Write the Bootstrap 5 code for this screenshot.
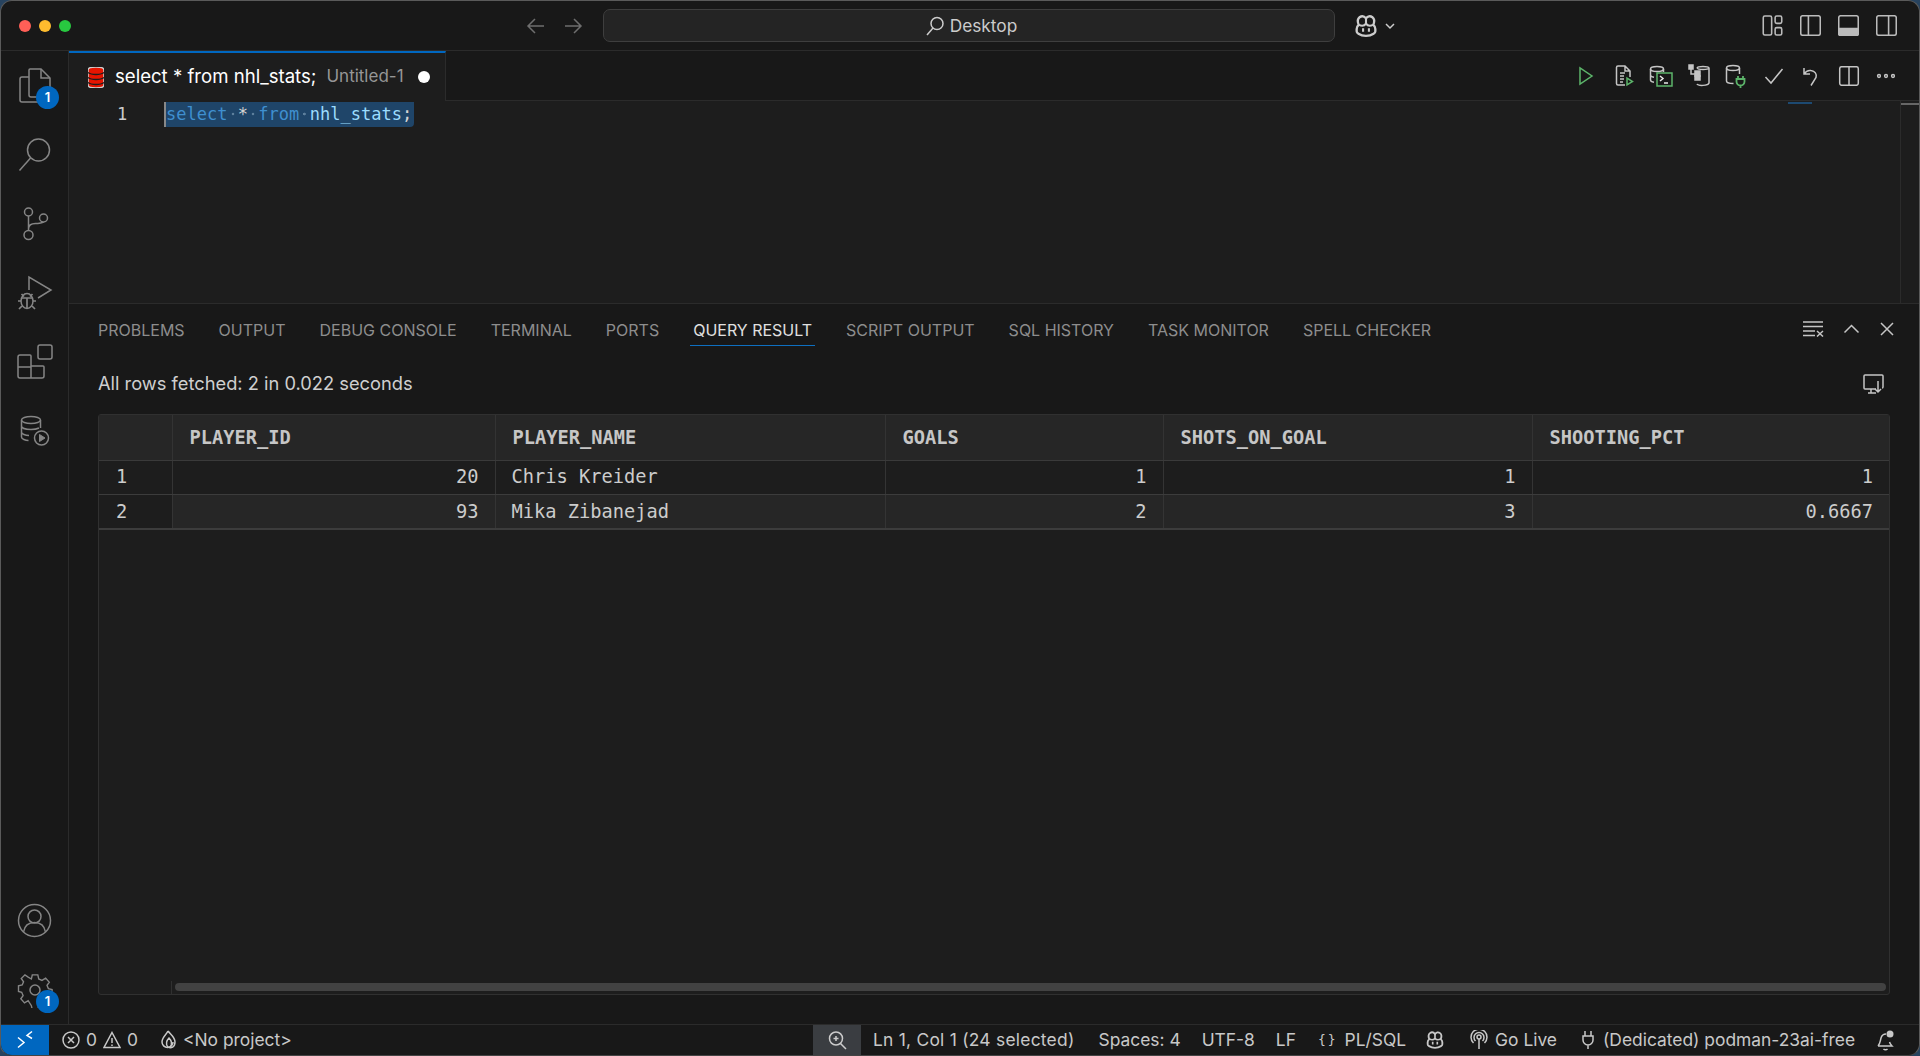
<!DOCTYPE html>
<html lang="en">
<head>
  <meta charset="UTF-8">
  <meta name="viewport" content="width=device-width, initial-scale=1.0">
  <title>select * from nhl_stats;</title>
  <link rel="stylesheet" href="https://cdn.jsdelivr.net/npm/bootstrap@5.3.2/dist/css/bootstrap.min.css"/>
  <style>
    html, body { height: 100%; overflow: hidden; background: #27435f; }
    body { font-family: Inter, "Liberation Sans", sans-serif; color: #ccc; }
    svg { display: block; flex: none; fill: none; stroke: currentColor; stroke-width: 1.5; }

    .vs-window { height: 1056px; border: 1px solid #5a5a5a; border-bottom-color: #444; border-radius: 12px; overflow: hidden; background: #181818; }

    /* title bar */
    .vs-title { height: 50px; flex: none; border-bottom: 1px solid #2b2b2b; position: relative; }
    .light { width: 12px; height: 12px; border-radius: 50%; }
    .lights { width: 511px; padding-left: 18px; gap: 8px; }
    .vs-nav { width: 91px; color: #6e6e6e; gap: 17px; padding-left: 14px; }
    .vs-search { width: 732px; height: 33px; padding-left: 4px; background: #242424; border: 1px solid #3e3e3e; border-radius: 7px; color: #ccc; font-size: 17.3px; gap: 5px; }
    .vs-title-copilot { margin-left: 17px; gap: 5px; color: #ccc; }
    .vs-layout { margin-left: auto; gap: 17px; padding-right: 22px; color: #bbb; }

    /* activity bar */
    .vs-activity { width: 68px; flex: none; border-right: 1px solid #2b2b2b; color: #858585; }
    .vs-act-item { height: 69px; width: 67px; position: relative; }
    .vs-badge { position: absolute; left: 35px; top: 35px; width: 23px; height: 23px; border-radius: 50%; background: #0067c0; color: #fff; font-size: 13px; font-weight: 600; line-height: 23px; text-align: center; }

    /* editor tab row */
    .vs-tabbar { height: 50px; flex: none; border-bottom: 1px solid #2b2b2b; }
    .vs-tab { width: 377px; background: #1d1d1d; border-top: 2px solid #0067c0; border-right: 1px solid #2b2b2b; margin-bottom: -1px; padding-left: 19px; }
    .vs-tab-name { color: #fff; font-size: 18.6px; margin-left: 11px; white-space: nowrap; }
    .vs-tab-path { color: #969696; font-size: 17px; margin-left: 10px; white-space: nowrap; }
    .vs-tab-dot { width: 12px; height: 12px; border-radius: 50%; background: #fff; margin-left: 14px; }
    .vs-actions { margin-left: auto; padding-right: 21px; gap: 13.5px; color: #c5c5c5; }
    .vs-green { color: #5cb46a; }

    /* editor */
    .vs-editor { height: 203px; flex: none; background: #1d1d1d; border-bottom: 1px solid #2b2b2b; position: relative; font-family: "DejaVu Sans Mono", monospace; font-size: 17px; }
    .vs-gutter { width: 95px; padding: 1px 0 0 48px; color: #cccccc; line-height: 25px; }
    .vs-sel { height: 25px; line-height: 25px; margin-top: 1px; padding-right: 2px; background: #1f4569; border-left: 2px solid #888; border-radius: 0 0 4px 0; color: #d4d4d4; white-space: pre; letter-spacing: .02px; }
    .kw { color: #3f8fcf; }
    .id { color: #9cdcfe; }
    .ws { background: radial-gradient(circle, #5d7f9c 1.4px, transparent 1.6px) center no-repeat; }
    .vs-ruler-mark { position: absolute; right: 107px; top: 1px; width: 24px; height: 2px; background: #1d4a72; }
    .vs-ruler { position: absolute; right: 0; top: 0; bottom: 0; width: 19px; border-left: 1px solid #2b2b2b; }
    .vs-ruler::before { content: ""; display: block; height: 2px; background: #666; margin-top: 2px; }

    /* panel */
    .vs-panel { min-height: 0; }
    .vs-ptabs { height: 42px; flex: none; padding: 0 24px 0 26px; }
    .vs-ptab { font-size: 16px; color: #8d8d8d; padding: 0 3px; height: 42px; line-height: 52px; margin-right: 28px; white-space: nowrap; }
    .vs-ptab-on { color: #e0e0e0; border-bottom: 1px solid #0e6fc0; }
    .vs-ptools { margin-left: auto; gap: 19px; color: #c5c5c5; height: 50px; }
    .vs-msg { height: 68px; flex: none; padding: 8px 35px 0 29px; font-size: 18.3px; color: #cfcfcf; }
    .vs-grid { margin: 0 29px 29px 29px; flex-grow: 1; background: #1d1d1d; border: 1px solid #303030; border-radius: 3px; position: relative; min-height: 0; }
    .vs-table { table-layout: fixed; width: 100%; --bs-table-bg: transparent; --bs-table-color: #ccc; --bs-table-border-color: #383838; margin: 0; font-family: "DejaVu Sans Mono", monospace; font-size: 18.7px; }
    .vs-table th, .vs-table td { padding: 1px 16px 0; vertical-align: middle; border-left: 1px solid #343434; white-space: nowrap; }
    .vs-table th { height: 45px; padding-left: 17px; font-weight: 600; color: #c6c6c6; background: #262626; border-bottom: 1px solid #3a3a3a; border-left-color: transparent; }
    .vs-table td { height: 34px; border-bottom: 1px solid #3c3c3c; }
    .vs-table tr > :first-child { border-left: 0; }
    .vs-table td:first-child { padding-left: 17px; background: #1d1d1d; }
    .vs-table .vs-row2 td { background: #262626; border-bottom-width: 2px; height: 35px; padding-top: 2px; }
    .vs-table .vs-row2 td:first-child { background: #1d1d1d; }
    .vs-table td.vs-num { text-align: right; }
    .c0 { width: 73px; } .c1 { width: 323px; } .c2 { width: 390px; } .c3 { width: 278px; } .c4 { width: 369px; }
    .vs-th-line { border-left: 1px solid #333 !important; }
    .vs-corner { position: absolute; left: 72px; bottom: 0; width: 1px; height: 13px; background: #303030; }
    .vs-scroll { position: absolute; left: 76px; right: 3px; bottom: 3px; height: 8px; border-radius: 4px; background: #424242; }

    /* status bar */
    .vs-status { height: 31px; flex: none; border-top: 1px solid #2b2b2b; font-size: 17.4px; color: #c8c8c8; white-space: nowrap; }
    .vs-remote { width: 48px; background: #0067c0; color: #fff; }
    .vs-zoom { width: 48px; background: #3a3d41; color: #ccc; }
    .vs-sleft { width: 764px; gap: 6px; padding-left: 13px; }
    .vs-sright { margin-left: 12px; }
    .vs-ln { letter-spacing: .25px; }
    .gap-a { margin-left: 24px; } .gap-b { margin-left: 21px; } .gap-c { margin-left: 22px; } .gap-d { margin-left: 7px; }
    .gap-e { margin-left: 18px; } .gap-f { margin-left: 24px; } .gap-g { margin-left: 7px; } .gap-h { margin-left: 8px; } .gap-i { margin-left: 20px; }
    .vs-braces { letter-spacing: 2px; font-family: "DejaVu Sans Mono", monospace; font-size: 13px; }
    .vs-flame { margin-left: 16px; }
  </style>
</head>
<body>
  <svg width="0" height="0" style="position:absolute">
    <defs>
      <symbol id="i-copilot" viewBox="0 0 24 24">
        <path d="M6.500 4.500c2-1.500 4-1 5.500 1 1.500-2 3.500-2.500 5.500-1 1.700 1.300 1.800 4 .8 6.500 1.200 1 1.700 2 1.700 3.500v2c0 1-.6 1.700-1.500 2.200C16.500 20 14.500 20.500 12 20.500S7.500 20 5.500 18.700C4.600 18.200 4 17.500 4 16.500v-2c0-1.500.5-2.500 1.700-3.500C4.700 8.500 4.800 5.800 6.500 4.500Z" stroke-width="2"/>
        <path d="M6 11c2 1 4.500 1 6-1 1.500 2 4 2 6 1M12 5.500V10M9.500 14v3M14.500 14v3" stroke-width="1.800"/>
      </symbol>
    </defs>
  </svg>

  <div class="vs-window d-flex flex-column">

    <div class="vs-title d-flex align-items-center">
      <div class="lights d-flex align-items-center">
        <span class="light" style="background:#ff5f57"></span>
        <span class="light" style="background:#febc2e"></span>
        <span class="light" style="background:#28c840"></span>
      </div>
      <div class="vs-nav d-flex align-items-center">
        <svg width="20" height="20" viewBox="0 0 20 20"><path d="M18 10H2.500M9 3l-7 7 7 7"/></svg>
        <svg width="20" height="20" viewBox="0 0 20 20"><path d="M2 10h15.500M11 3l7 7-7 7"/></svg>
      </div>
      <div class="vs-search d-flex align-items-center justify-content-center">
        <svg width="20" height="20" viewBox="0 0 20 20" stroke-width="1.200"><circle cx="12" cy="7.500" r="6"/><path d="M8 12 2 19"/></svg>
        <span>Desktop</span>
      </div>
      <div class="vs-title-copilot d-flex align-items-center">
        <svg width="28" height="28"><use href="#i-copilot"/></svg>
        <svg width="10" height="10" viewBox="0 0 10 10" stroke-width="1"><path d="m1 3 4 4 4-4"/></svg>
      </div>
      <div class="vs-layout d-flex align-items-center">
        <svg width="21" height="21" viewBox="0 0 19 20" stroke-width="1.300"><rect x=".7" y="1" width="8" height="18" rx="1.500"/><rect x="12" y="1" width="6.300" height="7" rx="1.500"/><rect x="12" y="12" width="6.300" height="7" rx="1.500"/></svg>
        <svg width="21" height="21" viewBox="0 0 20 20" stroke-width="1.300"><rect x=".7" y=".7" width="18.600" height="18.600" rx="2"/><path d="M8 .7v18.600"/></svg>
        <svg width="21" height="21" viewBox="0 0 20 20" stroke-width="1.300"><rect x=".7" y=".7" width="18.600" height="18.600" rx="2"/><path d="M.7 13h18.600v4.500a2 2 0 0 1-2 2H2.700a2 2 0 0 1-2-2Z" fill="currentColor"/></svg>
        <svg width="21" height="21" viewBox="0 0 20 20" stroke-width="1.300"><rect x=".7" y=".7" width="18.600" height="18.600" rx="2"/><path d="M12 .7v18.600"/></svg>
      </div>
    </div>

    <div class="d-flex flex-grow-1" style="min-height:0">
      <nav class="vs-activity d-flex flex-column">
        <div class="vs-act-item d-flex align-items-center justify-content-center">
          <svg width="32" height="36" viewBox="0 0 32 36" stroke-width="2"><path d="M11 1h11l9 9v17a2 2 0 0 1-2 2H12a2 2 0 0 1-2-2V2a1 1 0 0 1 1-1Z"/><path d="M22 1v9h9" stroke-width="1.500"/><path d="M10 9H3a2 2 0 0 0-2 2v21a2 2 0 0 0 2 2h16a2 2 0 0 0 2-2v-3"/></svg>
          <span class="vs-badge">1</span>
        </div>
        <div class="vs-act-item d-flex align-items-center justify-content-center">
          <svg width="34" height="35" viewBox="0 0 34 35" stroke-width="2.400"><circle cx="20.500" cy="13" r="11"/><path d="M12.500 21 1.500 33.500"/></svg>
        </div>
        <div class="vs-act-item d-flex align-items-center justify-content-center">
          <svg width="28" height="35" viewBox="0 0 28 35" stroke-width="2.200"><circle cx="7.500" cy="6" r="4"/><circle cx="7.500" cy="29" r="4.500"/><circle cx="22.500" cy="12" r="4"/><path d="M7.500 10v14.500M7.500 23c0-4 3-5.500 7-5.500 3 0 8-1 8-1.500"/></svg>
        </div>
        <div class="vs-act-item d-flex align-items-center justify-content-center">
          <svg width="36" height="36" viewBox="0 0 36 36" stroke-width="2"><path d="M12 15V2l22 13-13 8"/><ellipse cx="10" cy="26" rx="6" ry="7.500"/><path d="M5 23h10M10 23v10M4.500 19l2.500 2.500M15.500 19 13 21.500M1 26h3M16 26h3M2 34l3-3M18 34l-3-3" stroke-width="1.700"/></svg>
        </div>
        <div class="vs-act-item d-flex align-items-center justify-content-center">
          <svg width="36" height="36" viewBox="0 0 36 36" stroke-width="2"><rect x="21" y="1" width="14" height="14" rx="2"/><path d="M3 11h10a1 1 0 0 1 1 1v10h12a1 1 0 0 1 1 1v9a2 2 0 0 1-2 2H3a2 2 0 0 1-2-2V13a2 2 0 0 1 2-2ZM1 23h13v11"/></svg>
        </div>
        <div class="vs-act-item d-flex align-items-center justify-content-center">
          <svg width="30" height="32" viewBox="0 0 30 32" stroke-width="1.900"><ellipse cx="11" cy="5" rx="9.500" ry="3.500"/><path d="M1.500 5v17c0 2 4 3.500 7 3.500M20.500 5v8M1.500 11c0 2 4 3.500 9.500 3.500 3 0 6-.5 8-1.500M1.500 17c0 2 4 3.500 7.500 3.500"/><circle cx="21.500" cy="23" r="7"/><path d="M19.500 19.500v7l5.500-3.500Z" fill="currentColor" stroke-width="1"/></svg>
        </div>
        <div class="mt-auto">
          <div class="vs-act-item d-flex align-items-center justify-content-center">
            <svg width="35" height="35" viewBox="0 0 35 35" stroke-width="2.200"><circle cx="17.500" cy="17.500" r="16"/><circle cx="17.500" cy="13.500" r="6.500"/><path d="M6.500 29c1-6 5-9.500 11-9.500s10 3.500 11 9.500"/></svg>
          </div>
          <div class="vs-act-item d-flex align-items-center justify-content-center">
            <svg width="36" height="36" viewBox="0 0 36 36" stroke-width="2.200"><path d="M15 2h6l1 4.500 3.500 1.500 4-2.500 4 4.500-2.500 3.500 1.500 3.500 4 1v6l-4 1-1.500 3.500 2.500 4-4.500 4-3.500-2.500-3.500 1.500-1 4.500h-6l-1-4.500L10.500 30l-4 2.500-4-4.500L5 24.500 3.500 21l-3.500-1v-6l4-1L5.500 9.500 3 6l4-4 3.500 2.500L14 6.500Z" transform="translate(1.500 1) scale(.92)"/><circle cx="18" cy="18" r="5"/></svg>
            <span class="vs-badge">1</span>
          </div>
        </div>
      </nav>

      <main class="flex-grow-1 d-flex flex-column" style="min-width:0">
        <div class="vs-tabbar d-flex">
          <div class="vs-tab d-flex align-items-center">
            <svg width="16" height="21" viewBox="0 0 16 21" stroke="none"><path d="M8 0c4.400 0 8 1.200 8 3v15c0 1.800-3.600 3-8 3s-8-1.200-8-3V3c0-1.800 3.600-3 8-3Z" fill="#e51400"/><path d="M0 5.500c1.500 1.300 4.500 2 8 2s6.500-.7 8-2M0 10.500c1.500 1.300 4.500 2 8 2s6.500-.7 8-2M0 15.500c1.500 1.300 4.500 2 8 2s6.500-.7 8-2" stroke="#1d1d1d" stroke-width="1.300"/></svg>
            <span class="vs-tab-name">select * from nhl_stats;</span>
            <span class="vs-tab-path">Untitled-1</span>
            <span class="vs-tab-dot"></span>
          </div>
          <div class="vs-actions d-flex align-items-center">
            <svg class="vs-green" width="24" height="20" viewBox="0 0 20 20" stroke-width="1.500"><path d="M4 2v16l12-8Z"/></svg>
            <svg width="24" height="22" viewBox="0 0 20 22" stroke-width="1.300"><path d="M11 20H4a1.500 1.500 0 0 1-1.500-1.500v-16A1.500 1.500 0 0 1 4 1h7l5 5v6M11 1v5h5M6 8h5M6 11h4M6 14h4M6 17h3"/><path d="M13 13v7l5.500-3.500Z" stroke="#5cb46a"/></svg>
            <svg width="24" height="22" viewBox="0 0 24 22" stroke-width="1.300"><ellipse cx="8" cy="4" rx="6.500" ry="2.500"/><path d="M1.500 4v11c0 1.200 1.500 2 3.500 2.300M14.500 4v3M1.500 10c0 1.200 1.500 2 3.500 2.300"/><rect x="8" y="8" width="15" height="13" stroke="#5cb46a" stroke-width="1.500"/><path d="m11 11 3 2.500-3 2.500M15 18h4" stroke="#e8e8e8"/></svg>
            <svg width="24" height="23" viewBox="0 0 22 23" stroke-width="1.300"><path d="M9 4c1-2 11-2 12 0v15c-1 3-11 3-12 1M9 4c1 2 11 2 12 0"/><rect x="1" y="1" width="4" height="4" fill="currentColor"/><path d="M3 5v5h5v5"/><rect x="7" y="7" width="5" height="5" fill="currentColor"/><rect x="7" y="12" width="5" height="4" fill="currentColor"/></svg>
            <svg width="24" height="24" viewBox="0 0 22 24" stroke-width="1.300"><ellipse cx="8" cy="4" rx="6.500" ry="2.500"/><path d="M1.500 4v13c0 1.500 3 2.500 7 2.500M14.500 4v6"/><path d="M13 12v3M18 12v3M11.500 15h8v2.500a4 4 0 0 1-8 0ZM15.500 21.500V24" stroke="#5cb46a" stroke-width="1.800"/></svg>
            <svg width="24" height="20" viewBox="0 0 20 20" stroke-width="1.400"><path d="m1.500 11 5.500 6L18.500 3"/></svg>
            <svg width="24" height="22" viewBox="0 0 20 22" stroke-width="1.400"><path d="M3 3v6h6M3 9c2-3 4-4 7-3.500 4 .5 6 3.500 5 7l-5 8"/></svg>
            <svg width="24" height="20" viewBox="0 0 20 20" stroke-width="1.400"><rect x=".7" y=".7" width="18.600" height="18.600" rx="2"/><path d="M10 .7v18.600"/></svg>
            <svg width="24" height="20" viewBox="0 0 20 20" stroke="none" fill="currentColor"><circle cx="3" cy="10" r="1.400"/><circle cx="10" cy="10" r="1.400"/><circle cx="17" cy="10" r="1.400"/></svg>
          </div>
        </div>

        <div class="vs-editor d-flex align-items-start">
          <div class="vs-gutter">1</div>
          <div class="vs-sel"><span class="kw">select</span><span class="ws"> </span>*<span class="ws"> </span><span class="kw">from</span><span class="ws"> </span><span class="id">nhl_stats</span>;</div>
          <div class="vs-ruler-mark"></div>
          <div class="vs-ruler"></div>
        </div>

        <section class="vs-panel flex-grow-1 d-flex flex-column">
          <div class="vs-ptabs d-flex">
            <span class="vs-ptab">PROBLEMS</span>
            <span class="vs-ptab">OUTPUT</span>
            <span class="vs-ptab">DEBUG CONSOLE</span>
            <span class="vs-ptab">TERMINAL</span>
            <span class="vs-ptab">PORTS</span>
            <span class="vs-ptab vs-ptab-on">QUERY RESULT</span>
            <span class="vs-ptab">SCRIPT OUTPUT</span>
            <span class="vs-ptab">SQL HISTORY</span>
            <span class="vs-ptab">TASK MONITOR</span>
            <span class="vs-ptab">SPELL CHECKER</span>
            <div class="vs-ptools d-flex align-items-center">
              <svg width="21" height="16" viewBox="0 0 21 16" stroke-width="1.500"><path d="M0 1h20M0 5.500h20M0 10h12M0 14.500h12M14 10l6 5.500M20 10l-6 5.500"/></svg>
              <svg width="17" height="16" viewBox="0 0 17 16" stroke-width="1.400"><path d="m1.500 11.500 7-7 7 7"/></svg>
              <svg width="16" height="16" viewBox="0 0 16 16" stroke-width="1.500"><path d="m2 2 12 12M14 2 2 14"/></svg>
            </div>
          </div>
          <div class="vs-msg d-flex align-items-center justify-content-between">
            <span>All rows fetched: 2 in 0.022 seconds</span>
            <svg width="21" height="20" viewBox="0 0 21 20" stroke-width="1.400" style="color:#c5c5c5"><path d="M13 15H2a1 1 0 0 1-1-1V2a1 1 0 0 1 1-1h17a1 1 0 0 1 1 1v11a1 1 0 0 1-1 1M5 19h8M8 15v4"/><path d="M15 7v11M12 15l3 3 3-3"/></svg>
          </div>
          <div class="vs-grid">
            <table class="table vs-table">
              <colgroup><col class="c0"><col class="c1"><col class="c2"><col class="c3"><col class="c4"><col></colgroup>
              <thead>
                <tr><th></th><th class="vs-th-line">PLAYER_ID</th><th class="vs-th-line">PLAYER_NAME</th><th class="vs-th-line">GOALS</th><th class="vs-th-line">SHOTS_ON_GOAL</th><th class="vs-th-line">SHOOTING_PCT</th></tr>
              </thead>
              <tbody>
                <tr><td>1</td><td class="vs-num">20</td><td>Chris Kreider</td><td class="vs-num">1</td><td class="vs-num">1</td><td class="vs-num">1</td></tr>
                <tr class="vs-row2"><td>2</td><td class="vs-num">93</td><td>Mika Zibanejad</td><td class="vs-num">2</td><td class="vs-num">3</td><td class="vs-num">0.6667</td></tr>
              </tbody>
            </table>
            <div class="vs-corner"></div>
            <div class="vs-scroll"></div>
          </div>
        </section>
      </main>
    </div>

    <footer class="vs-status d-flex align-items-stretch">
      <div class="vs-remote d-flex align-items-center justify-content-center">
        <svg width="20" height="20" viewBox="0 0 20 20" stroke-width="1.500"><path d="m3 8 6 5-6 5M17 2l-5 4 5 3" transform="translate(0 -.5)"/></svg>
      </div>
      <div class="vs-sleft d-flex align-items-center">
        <svg width="18" height="18" viewBox="0 0 18 18" stroke-width="1.200"><circle cx="9" cy="9" r="8"/><path d="m6 6 6 6M12 6l-6 6"/></svg>
        <span>0</span>
        <svg width="18" height="18" viewBox="0 0 18 18" stroke-width="1.200"><path d="M9 1.500 17 16.500H1ZM9 7v5M9 13.500v1.500"/></svg>
        <span>0</span>
        <svg class="vs-flame" width="17" height="21" viewBox="0 0 17 21" stroke-width="1.100"><path d="M8 1c-1 3-6 6-6 11a5.500 5.500 0 0 0 11 0"/><path d="M8 1c2 3 7 6 7 11s-4 7-7 5c-3-3-1-7 1-9 2 2 4 6 1 9"/></svg>
        <span>&lt;No project&gt;</span>
      </div>
      <div class="vs-zoom d-flex align-items-center justify-content-center">
        <svg width="19" height="19" viewBox="0 0 19 19" stroke-width="1.200"><circle cx="8" cy="7.500" r="6.500"/><path d="M8 5v5M5.500 7.500h5M12.500 12.500l5.500 5.500"/></svg>
      </div>
      <div class="vs-sright d-flex align-items-center">
        <span class="vs-ln">Ln 1, Col 1 (24 selected)</span>
        <span class="gap-a">Spaces: 4</span>
        <span class="gap-b">UTF-8</span>
        <span class="gap-b">LF</span>
        <span class="gap-c vs-braces">{}</span>
        <span class="gap-d">PL/SQL</span>
        <svg class="gap-e" width="22" height="22"><use href="#i-copilot"/></svg>
        <svg class="gap-f" width="18" height="20" viewBox="0 0 18 20" stroke-width="1.200"><circle cx="9" cy="7" r="2"/><path d="M9 9v10M5.500 11a5 5 0 1 1 7 0M3.500 13a8 8 0 1 1 11 0"/></svg>
        <span class="gap-g">Go Live</span>
        <svg class="gap-f" width="14" height="20" viewBox="0 0 14 20" stroke-width="1.200"><path d="M4 1v5M10 1v5M2 6h10v4a5 5 0 0 1-10 0ZM7 15v4"/></svg>
        <span class="gap-h">(Dedicated) podman-23ai-free</span>
        <svg class="gap-i" width="22" height="22" viewBox="0 0 22 22" stroke-width="1.200"><path d="M3 17c2-2 2-4 3-8 .7-2.500 2.500-4 5-4M3 17h14c-1-1-2-2-2.500-4M8.500 20c1 1 3 1 4 0"/><circle cx="15" cy="5" r="3.500" fill="currentColor" stroke="none"/></svg>
      </div>
    </footer>
  </div>
</body>
</html>
